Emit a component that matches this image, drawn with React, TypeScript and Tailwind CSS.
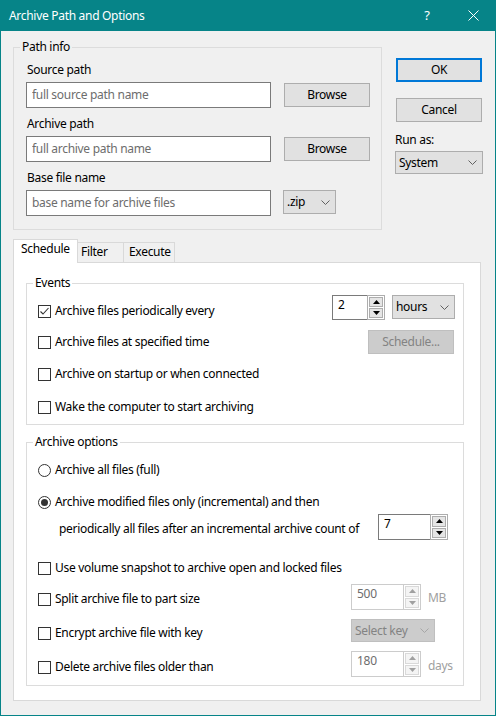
import React from 'react';

// Small Win10-style dialog pieces

function Chevron({ disabled }: { disabled?: boolean }) {
  return (
    <svg width="9" height="5" viewBox="0 0 9 5" className="shrink-0">
      <path d="M0.5 0.5 L4.5 4.5 L8.5 0.5" fill="none" stroke={disabled ? '#a6a6a6' : '#606060'} strokeWidth="1" />
    </svg>
  );
}

function Arrow({ up, disabled }: { up?: boolean; disabled?: boolean }) {
  return (
    <svg width="7" height="4" viewBox="0 0 7 4">
      <path d={up ? 'M0 4 L3.5 0 L7 4 Z' : 'M0 0 L3.5 4 L7 0 Z'} fill={disabled ? '#a0a0a0' : '#000000'} />
    </svg>
  );
}

function Spin({ value, className, disabled }: { value: string; className: string; disabled?: boolean }) {
  return (
    <div className={`flex ${className}`}>
      <div
        className={`flex-1 bg-white border border-r-0 pl-[5px] pt-px leading-[16px] ${
          disabled ? 'border-[#cccccc] text-[#6d6d6d]' : 'border-[#7a7a7a] text-black'
        }`}
      >
        {value}
      </div>
      <div className={`w-[18px] flex flex-col gap-px bg-white border p-px ${disabled ? 'border-[#cccccc]' : 'border-[#adadad]'}`}>
        <div className={`flex-1 flex items-center justify-center border ${disabled ? 'border-[#d9d9d9] bg-[#f4f4f4]' : 'border-[#adadad] bg-[#e5e5e5]'}`}>
          <Arrow up disabled={disabled} />
        </div>
        <div className={`flex-1 flex items-center justify-center border ${disabled ? 'border-[#d9d9d9] bg-[#f4f4f4]' : 'border-[#adadad] bg-[#e5e5e5]'}`}>
          <Arrow disabled={disabled} />
        </div>
      </div>
    </div>
  );
}

function Combo({ value, className, disabled }: { value: string; className: string; disabled?: boolean }) {
  return (
    <div
      className={`flex items-center justify-between pl-[3px] pr-[5px] border ${
        disabled ? 'bg-[#cccccc] border-[#bfbfbf] text-[#838383]' : 'bg-[#e1e1e1] border-[#adadad] text-black'
      } ${className}`}
    >
      <span className="leading-[16px]">{value}</span>
      <Chevron disabled={disabled} />
    </div>
  );
}

function Check({ label, checked, className = '' }: { label: string; checked?: boolean; className?: string }) {
  return (
    <div className={`flex items-center gap-[4px] h-[16px] ${className}`}>
      <span className="w-[13px] h-[13px] shrink-0 border border-[#333333] bg-white flex items-center justify-center">
        {checked && (
          <svg width="11" height="11" viewBox="0 0 11 11">
            <path d="M1.5 5.5 L4 8 L9.5 2" fill="none" stroke="#333333" strokeWidth="1.1" />
          </svg>
        )}
      </span>
      <span className="leading-[16px] whitespace-nowrap">{label}</span>
    </div>
  );
}

function Radio({ label, checked, className = '' }: { label: string; checked?: boolean; className?: string }) {
  return (
    <div className={`flex items-center gap-[4px] h-[16px] ${className}`}>
      <span className="w-[13px] h-[13px] shrink-0 rounded-full border border-[#333333] bg-white flex items-center justify-center">
        {checked && <span className="w-[7px] h-[7px] rounded-full bg-[#333333]" />}
      </span>
      <span className="leading-[16px] whitespace-nowrap">{label}</span>
    </div>
  );
}

function Btn({ label, className = '' }: { label: string; className?: string }) {
  return (
    <button type="button" className={`flex items-center justify-center bg-[#e1e1e1] border border-[#adadad] leading-[16px] ${className}`}>
      {label}
    </button>
  );
}

function PathField({ label, placeholder, first }: { label: string; placeholder: string; first?: boolean }) {
  return (
    <div className={first ? '' : 'mt-[8px]'}>
      <div className="pl-px leading-[16px]">{label}</div>
      <div className="mt-[4px] flex items-start">
        <input
          className="w-[245px] h-[26px] border border-[#7a7a7a] bg-white pl-[5px] pb-[2px] outline-none placeholder:text-[#6d6d6d]"
          placeholder={placeholder}
        />
        <Btn label="Browse" className="ml-[13px] mt-px w-[86px] h-[24px]" />
      </div>
    </div>
  );
}

export default function App() {
  return (
    <div className="w-[496px] h-[716px] flex flex-col font-['Noto_Sans',sans-serif] text-[12px] tracking-[-0.3px] text-black select-none">
      {/* title bar */}
      <div className="h-[31px] shrink-0 bg-[#068488] flex items-center text-white">
        <span className="pl-[9px] flex-1 leading-[16px]">Archive Path and Options</span>
        <span className="w-[46px] h-full flex items-center justify-center text-[13px]">?</span>
        <span className="w-[46px] h-full flex items-center justify-center">
          <svg width="11" height="11" viewBox="0 0 11 11">
            <path d="M0.5 0.5 L10.5 10.5 M10.5 0.5 L0.5 10.5" stroke="#ffffff" strokeWidth="1" />
          </svg>
        </span>
      </div>

      <div className="flex-1 bg-[#f0f0f0] border-x border-b border-[#068488]">
        {/* top section */}
        <div className="flex items-start pl-[12px] pt-[8px]">
          <fieldset className="w-[369px] border border-[#dcdcdc]">
            <legend className="ml-[6px] px-[2px] leading-[16px]">Path info</legend>
            <div className="pl-[12px] pt-[7px] pb-[13px]">
              <PathField first label="Source path" placeholder="full source path name" />
              <PathField label="Archive path" placeholder="full archive path name" />
              <div className="mt-[8px]">
                <div className="pl-px leading-[16px]">Base file name</div>
                <div className="mt-[4px] flex items-start">
                  <input
                    className="w-[245px] h-[26px] border border-[#7a7a7a] bg-white pl-[5px] pb-[2px] outline-none placeholder:text-[#6d6d6d]"
                    placeholder="base name for archive files"
                  />
                  <Combo value=".zip" className="ml-[12px] w-[53px] h-[24px]" />
                </div>
              </div>
            </div>
          </fieldset>

          <div className="ml-[13px] mt-[19px] w-[88px] flex flex-col">
            <button
              type="button"
              className="ml-px w-[86px] h-[24px] flex items-center justify-center bg-[#e1e1e1] border-2 border-[#0078d7] leading-[16px]"
            >
              OK
            </button>
            <Btn label="Cancel" className="ml-px mt-[16px] w-[86px] h-[24px]" />
            <div className="mt-[10px] leading-[16px]">Run as:</div>
            <Combo value="System" className="mt-[3px] w-[88px] h-[23px]" />
          </div>
        </div>

        {/* tabs */}
        <div className="ml-[12px] mt-[9px] flex items-end">
          <div className="relative z-10 -mb-px h-[24px] w-[65px] bg-white border border-b-0 border-[#d9d9d9] pl-[7px] pt-px leading-[16px]">
            Schedule
          </div>
          <div className="h-[20px] w-[46px] border-t border-r border-[#d9d9d9] pl-[3px] leading-[16px] pt-px">Filter</div>
          <div className="h-[20px] w-[51px] border-t border-r border-[#d9d9d9] pl-[5px] leading-[16px] pt-px">Execute</div>
        </div>

        <div className="ml-[12px] w-[468px] h-[439px] bg-white border border-[#d9d9d9] pl-[12px] pt-[12px]">
          {/* Events */}
          <fieldset className="w-[438px] border border-[#dcdcdc]">
            <legend className="ml-[6px] px-[2px] leading-[16px]">Events</legend>
            <div className="pl-[11px] pb-[9px]">
              <div className="mt-[4px] flex items-start">
                <Check checked label="Archive files periodically every" className="mt-[8px] w-[294px]" />
                <Spin value="2" className="w-[53px] h-[25px]" />
                <Combo value="hours" className="ml-[7px] w-[63px] h-[24px]" />
              </div>
              <div className="mt-[10px] flex items-start">
                <Check label="Archive files at specified time" className="mt-[4px] w-[330px]" />
                <button
                  type="button"
                  className="w-[86px] h-[24px] flex items-center justify-center bg-[#cccccc] border border-[#bfbfbf] text-[#838383] leading-[16px]"
                >
                  Schedule...
                </button>
              </div>
              <Check label="Archive on startup or when connected" className="mt-[12px]" />
              <Check label="Wake the computer to start archiving" className="mt-[17px]" />
            </div>
          </fieldset>

          {/* Archive options */}
          <fieldset className="mt-[9px] w-[438px] border border-[#dcdcdc]">
            <legend className="ml-[6px] px-[2px] leading-[16px]">Archive options</legend>
            <div className="pl-[11px] pb-[8px]">
              <Radio label="Archive all files (full)" className="mt-[12px]" />
              <Radio checked label="Archive modified files only (incremental) and then" className="mt-[16px]" />
              <div className="mt-[4px] flex items-start pl-[21px]">
                <div className="mt-[7px] w-[319px] leading-[16px] whitespace-nowrap">
                  periodically all files after an incremental archive count of
                </div>
                <Spin value="7" className="w-[70px] h-[26px]" />
              </div>
              <Check label="Use volume snapshot to archive open and locked files" className="mt-[20px]" />
              <div className="mt-[8px] flex items-start">
                <Check label="Split archive file to part size" className="mt-[7px] w-[313px]" />
                <Spin disabled value="500" className="w-[70px] h-[26px]" />
                <span className="ml-[7px] mt-[6px] leading-[16px] text-[#a0a0a0]">MB</span>
              </div>
              <div className="mt-[9px] flex items-start">
                <Check label="Encrypt archive file with key" className="mt-[6px] w-[313px]" />
                <Combo disabled value="Select key" className="w-[84px] h-[23px]" />
              </div>
              <div className="mt-[9px] flex items-start">
                <Check label="Delete archive files older than" className="mt-[8px] w-[313px]" />
                <Spin disabled value="180" className="w-[70px] h-[26px]" />
                <span className="ml-[7px] mt-[7px] leading-[16px] text-[#a0a0a0]">days</span>
              </div>
            </div>
          </fieldset>
        </div>
      </div>
    </div>
  );
}
